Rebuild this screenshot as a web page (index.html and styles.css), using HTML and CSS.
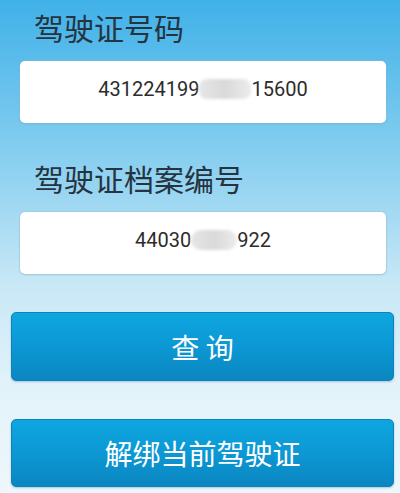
FILE: index.html
```html
<!DOCTYPE html>
<html lang="zh-CN">
<head>
<meta charset="utf-8">
<title>驾驶证</title>
<link rel="stylesheet" href="styles.css">
</head>
<body>
<div class="page">
  <section class="section">
    <div class="label">驾驶证号码</div>
    <div class="field"><span class="value">431224199<span class="mask mask-a"></span>15600</span></div>
  </section>
  <section class="section">
    <div class="label">驾驶证档案编号</div>
    <div class="field"><span class="value">44030<span class="mask mask-b"></span>922</span></div>
  </section>
  <button class="btn btn-query" type="button">查 询</button>
  <button class="btn btn-unbind" type="button">解绑当前驾驶证</button>
</div>
</body>
</html>
```
FILE: styles.css
```css
html, body {
  margin: 0;
  padding: 0;
  height: 100%;
}
body {
  background: linear-gradient(to bottom, #40b1e8 0%, #7ecbef 28%, #c9e8f6 58%, #e4f3fa 80%, #eef7fb 100%);
  font-family: "Noto Sans CJK SC", "Noto Sans", sans-serif;
  overflow: hidden;
}
.page {
  display: flex;
  flex-direction: column;
  padding: 7px 6px 0 11px;
}
.section {
  display: flex;
  flex-direction: column;
  margin-bottom: 35px;
}
.section + .section {
  margin-bottom: 38px;
}
.label {
  font-size: 30px;
  line-height: 40px;
  height: 40px;
  color: #263340;
  padding-left: 23px;
  margin-bottom: 14px;
}
.field {
  margin: 0 8px 0 9px;
  height: 62px;
  box-sizing: border-box;
  background: #ffffff;
  border-radius: 5px;
  box-shadow: 0 0 0 1px rgba(150, 190, 210, 0.35), 0 1px 2px rgba(80, 130, 160, 0.25);
  display: flex;
  align-items: center;
  justify-content: center;
  padding-bottom: 6px;
}
.value {
  font-family: Roboto, "Noto Sans", sans-serif;
  font-size: 20px;
  color: #2c2c2c;
  display: inline-flex;
  align-items: center;
}
.mask {
  display: inline-block;
  height: 20px;
  background: linear-gradient(to right, #e6e6e6, #d9d9d9 50%, #ececec);
  filter: blur(1.5px);
  border-radius: 8px;
}
.mask-a {
  width: 52px;
}
.mask-b {
  width: 46px;
  border-radius: 10px;
}
.btn {
  display: block;
  width: 100%;
  height: 69px;
  border: 1px solid #0b83bb;
  border-radius: 5px;
  background: linear-gradient(to bottom, #0ea6e0 0%, #0c98d4 50%, #0a86c0 100%);
  box-shadow: 0 1px 2px rgba(30, 90, 130, 0.3);
  color: #ffffff;
  font-family: "Noto Sans CJK SC", sans-serif;
  font-size: 28px;
  padding: 0;
  margin: 0;
}
.btn-query {
  margin-bottom: 38px;
}
.btn-unbind {
  height: 68px;
}
```
